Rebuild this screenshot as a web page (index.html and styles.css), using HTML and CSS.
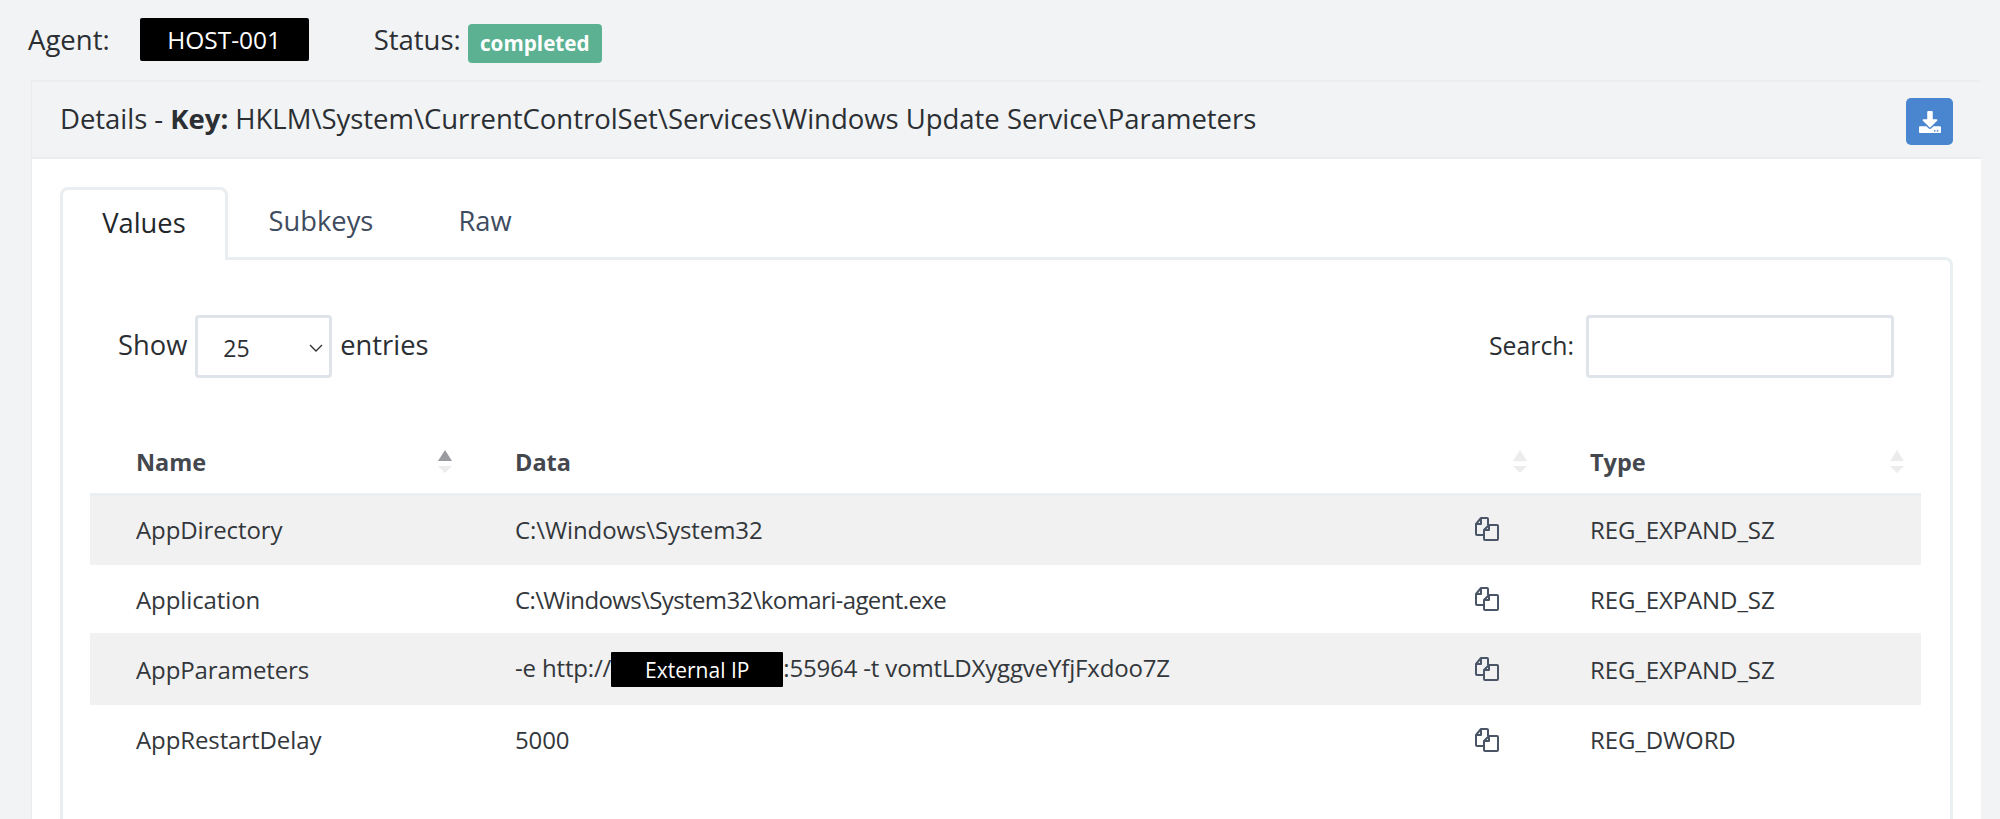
FILE: index.html
```html
<!DOCTYPE html>
<html lang="en">
<head>
<meta charset="utf-8">
<title>Details</title>
<link rel="stylesheet" href="styles.css">
</head>
<body>
<div class="topbar">
  <span class="label">Agent:</span>
  <span class="redact host">HOST-001</span>
  <span class="label status">Status:</span>
  <span class="badge">completed</span>
</div>
<section class="card">
  <header class="card-head">
    <div class="title">Details - <b>Key:</b> HKLM\System\CurrentControlSet\Services\Windows Update Service\Parameters</div>
    <button class="dl" type="button" aria-label="Download">
      <svg viewBox="0 0 512 512" width="22" height="22"><path fill="#fff" d="M216 0h80c13 0 24 11 24 24v168h88c18 0 27 21 14 34L270 378c-8 8-20 8-28 0L90 226c-13-13-4-34 14-34h88V24c0-13 11-24 24-24zM512 376v112c0 13-11 24-24 24H24c-13 0-24-11-24-24V376c0-13 11-24 24-24h147l49 49c20 20 52 20 72 0l49-49h147c13 0 24 11 24 24zM388 464c0-11-9-20-20-20s-20 9-20 20 9 20 20 20 20-9 20-20zm64 0c0-11-9-20-20-20s-20 9-20 20 9 20 20 20 20-9 20-20z"/></svg>
    </button>
  </header>
  <div class="card-body">
    <nav class="tabs">
      <span class="tab active">Values</span>
      <span class="tab">Subkeys</span>
      <span class="tab">Raw</span>
    </nav>
    <div class="pane">
      <div class="controls">
        <div class="length">Show <span class="select">25<svg viewBox="0 0 14 8" width="14" height="8"><path d="M1 1l6 6 6-6" fill="none" stroke="#333" stroke-width="1.4"/></svg></span> entries</div>
        <div class="search">Search: <span class="input"></span></div>
      </div>
      <table>
        <colgroup><col class="w1"><col class="w2"><col class="w3"><col class="w4"></colgroup>
        <thead>
          <tr>
            <th><span class="th">Name<span class="sort"><i class="up on"></i><i class="down"></i></span></span></th>
            <th colspan="2"><span class="th">Data<span class="sort"><i class="up"></i><i class="down"></i></span></span></th>
            <th><span class="th">Type<span class="sort"><i class="up"></i><i class="down"></i></span></span></th>
          </tr>
        </thead>
        <tbody>
          <tr class="odd">
            <td>AppDirectory</td><td>C:\Windows\System32</td>
            <td class="copy"><svg class="ci" viewBox="0 0 24 24"><use href="#copy"/></svg></td>
            <td>REG_EXPAND_SZ</td>
          </tr>
          <tr>
            <td>Application</td><td class="tight">C:\Windows\System32\komari-agent.exe</td>
            <td class="copy"><svg class="ci" viewBox="0 0 24 24"><use href="#copy"/></svg></td>
            <td>REG_EXPAND_SZ</td>
          </tr>
          <tr class="odd">
            <td>AppParameters</td><td class="params">-e http://<span class="redact ip">External IP</span>:55964 -t vomtLDXyggveYfjFxdoo7Z</td>
            <td class="copy"><svg class="ci" viewBox="0 0 24 24"><use href="#copy"/></svg></td>
            <td>REG_EXPAND_SZ</td>
          </tr>
          <tr>
            <td>AppRestartDelay</td><td>5000</td>
            <td class="copy"><svg class="ci" viewBox="0 0 24 24"><use href="#copy"/></svg></td>
            <td>REG_DWORD</td>
          </tr>
        </tbody>
      </table>
    </div>
  </div>
</section>
<svg class="defs" width="0" height="0"><defs><g id="copy" fill="none" stroke="#4a5568" stroke-width="2" stroke-linejoin="round"><path d="M8 18H2a1 1 0 0 1-1-1V7l5-6h6a1 1 0 0 1 1 1v6"/><path d="M6 1.500V7H1"/><path d="M9 13l5-5h8a1 1 0 0 1 1 1v13a1 1 0 0 1-1 1H10a1 1 0 0 1-1-1z"/><path d="M14 8v5H9"/></g></defs></svg>
</body>
</html>
```
FILE: styles.css
```css
* { box-sizing: border-box; }
html, body { margin: 0; height: 819px; overflow: hidden; }
body {
  background: #f1f3f5;
  color: #2b2f33;
  font-family: "Open Sans", "Noto Sans", sans-serif;
  font-size: 21px;
  padding: 0 0 0 31px;
}
.topbar {
  height: 80px;
  display: flex;
  align-items: center;
  margin-left: -3px;
  padding-bottom: 2px;
}
.label { font-size: 27.500px; }
.status { margin-left: 65px; }
.redact {
  background: #000;
  color: #fff;
  display: inline-flex;
  align-items: center;
  justify-content: center;
  border-radius: 2px;
}
.host { width: 169px; height: 43px; margin-left: 30px; font-size: 24.500px; }
.badge {
  background: #5bb192;
  color: #fff;
  font-weight: 700;
  font-size: 20.700px;
  height: 39px;
  width: 134px;
  margin-left: 7px;
  margin-top: 8px;
  border-radius: 4px;
  display: inline-flex;
  align-items: center;
  justify-content: center;
}
.card {
  background: #fff;
  width: 1950px;
  height: 739px;
  overflow: hidden;
  border-left: 1px solid #e9ecef;
}
.card-head {
  height: 79px;
  background: #f1f3f4;
  border-bottom: 2px solid #ebeeef;
  border-top: 2px solid #eceff1;
  display: flex;
  align-items: center;
  justify-content: space-between;
  padding: 0 28px 0 28px;
}
.title { font-size: 27.500px; letter-spacing: -0.03px; margin-top: -2px; }
.dl {
  width: 47px;
  height: 47px;
  border: 0;
  padding: 0;
  background: #4a86d0;
  border-radius: 5px;
  display: flex;
  align-items: center;
  justify-content: center;
  margin-top: 4px;
}
.card-body { padding: 28px 28px 0 28px; }
.tabs { display: flex; height: 70px; }
.tab {
  width: 186px;
  display: flex;
  align-items: center;
  justify-content: center;
  color: #3f4c5f;
  font-size: 27.300px;
  padding-bottom: 4px;
}
.tab.active {
  width: 168px;
  color: #22262a;
  background: #fff;
  border: 3px solid #e9eef0;
  border-bottom: 0;
  border-radius: 8px 8px 0 0;
  position: relative;
  z-index: 1;
  margin-bottom: -3px;
  padding-bottom: 5px;
}
.tab:nth-child(3) { width: 142px; }
.pane {
  border: 3px solid #e9eef0;
  border-bottom: 0;
  border-radius: 0 8px 0 0;
  height: 562px;
  padding: 55px 26px 0 27px;
}
.controls {
  display: flex;
  justify-content: space-between;
  align-items: flex-start;
  padding: 0 30px 0 28px;
  height: 116px;
}
.length { display: flex; align-items: center; gap: 8px; font-size: 27.300px; height: 62px; padding-bottom: 4px; }
.select {
  width: 137px;
  height: 63px;
  border: 3px solid #dfe3ea;
  border-radius: 4px;
  display: flex;
  align-items: center;
  justify-content: space-between;
  padding: 4px 6px 0 25px;
  font-size: 23px;
  margin-bottom: -4px;
}
.search { display: flex; align-items: center; gap: 12px; font-size: 24.800px; height: 60px; }
.input {
  display: block;
  width: 308px;
  height: 63px;
  border: 3px solid #dfe3ea;
  border-radius: 4px;
  background: #fff;
  margin-top: 3px;
}
table {
  border-collapse: collapse;
  table-layout: fixed;
  width: 1831px;
  font-size: 24px;
}
.w1 { width: 379px; }
.w2 { width: 1006px; }
.w3 { width: 69px; }
.w4 { width: 377px; }
th, td { text-align: left; padding: 0 0 0 46px; white-space: nowrap; }
thead tr { height: 63px; border-bottom: 3px solid #eceff1; }
th { font-size: 23.500px; font-weight: 700; color: #44484e; }
.th { display: flex; align-items: center; justify-content: space-between; padding-right: 17px; height: 40px; }
.sort { display: flex; flex-direction: column; align-items: center; gap: 5px; }
.sort i { display: block; width: 0; height: 0; border-left: 7px solid transparent; border-right: 7px solid transparent; }
.up { border-bottom: 11px solid #ececec; }
.down { border-top: 7px solid #ececec; }
.up.on { border-bottom-color: #999ba0; }
tbody tr { height: 70px; border-bottom: 2px solid #f0f2f3; }
tbody tr.odd { background: #f1f1f1; }
tbody tr:last-child { border-bottom: 0; }
td { letter-spacing: -0.1px; color: #33373b; }
td.tight { letter-spacing: -0.62px; }
td.params { letter-spacing: -0.16px; }
td.copy { padding-left: 0; }
.ci { width: 24px; height: 24px; display: block; }
.ip { width: 172px; height: 35px; font-size: 21px; letter-spacing: 0; vertical-align: middle; border-radius: 1px; margin-top: -2px; }
.defs { position: absolute; }
```
